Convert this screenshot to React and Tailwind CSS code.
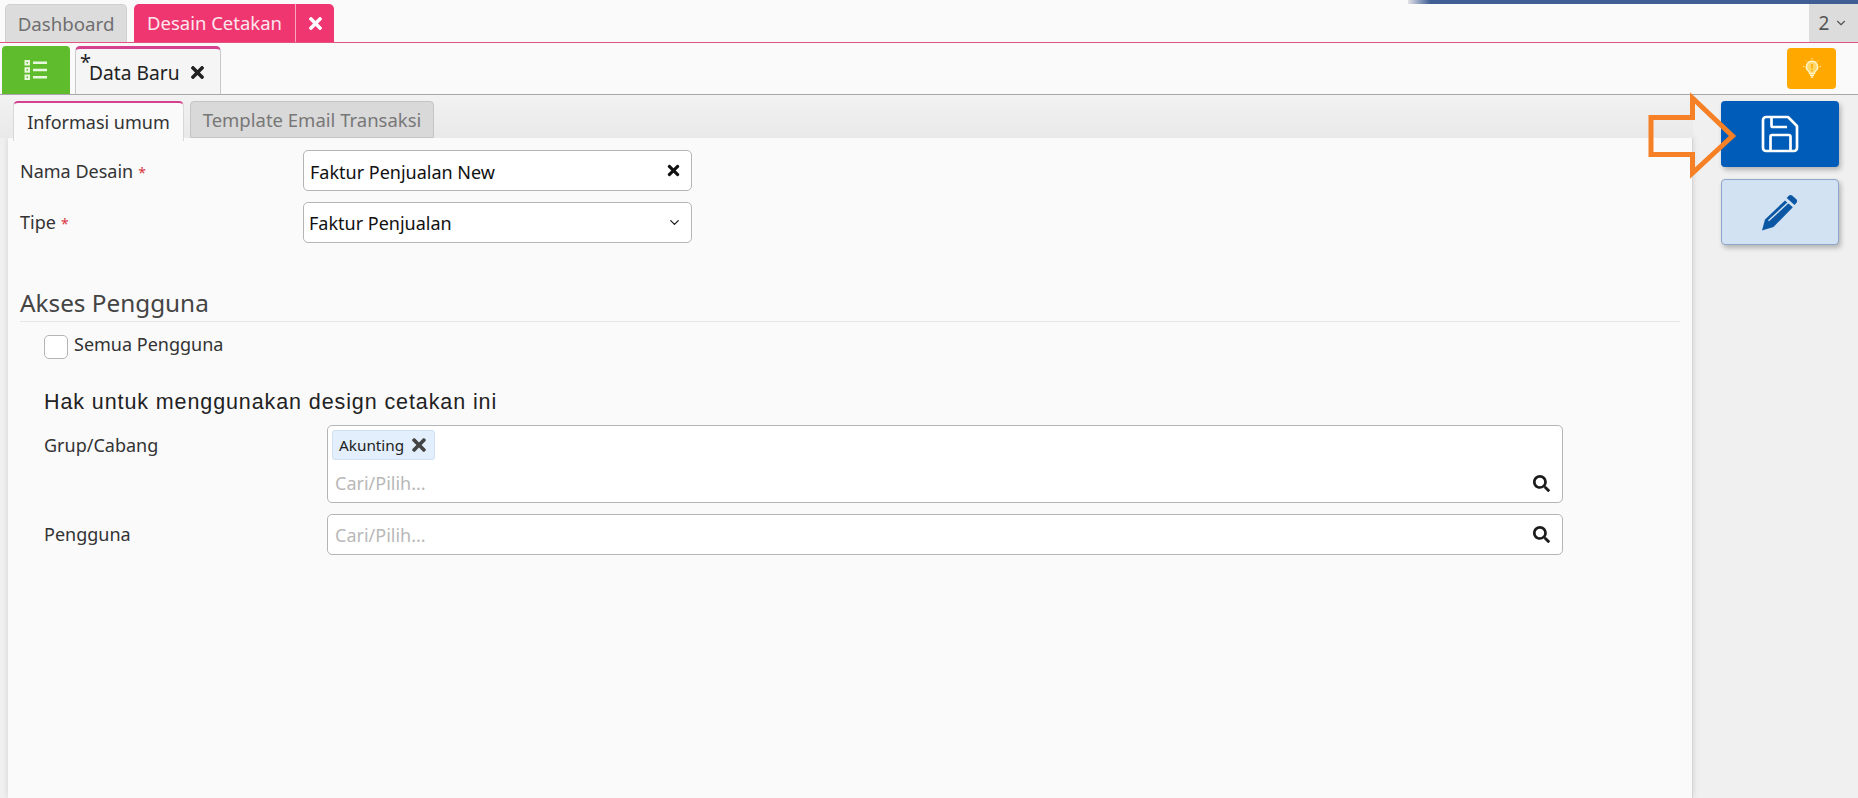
import React from "react";
import { FaTimes, FaSearch } from "react-icons/fa";
import { ChevronDown } from "lucide-react";

const ListIcon = () => (
  <svg width="24" height="22" viewBox="0 0 24 22" fill="none" stroke="#e9f7de" strokeWidth="2">
    <rect x="1.5" y="2" width="3.5" height="3.5" />
    <rect x="1.5" y="9.2" width="3.5" height="3.5" />
    <rect x="1.5" y="16.5" width="3.5" height="3.5" />
    <path d="M9 3.7h14M9 11h14M9 18.2h14" strokeWidth="2.4" />
  </svg>
);

const Bulb = () => (
  <svg width="20" height="22" viewBox="0 0 20 22" fill="none" stroke="#fff3c8">
    <path d="M10 3.200a5.600 5.600 0 0 0-3.400 10c.7.600 1 1.300 1 2.200h4.800c0-.9.300-1.600 1-2.200a5.600 5.600 0 0 0-3.400-10z" fill="#ffd766" strokeWidth="1.500" />
    <path d="M10 6v4.500M10 11.800v1.400" stroke="#ffa800" strokeWidth="1.500" />
    <path d="M8 17.200h4M8.800 19h2.400" strokeWidth="1.500" />
    <path d="M10 0v1.500M3.500 2.500l1 1M16.500 2.500l-1 1M1 8.500h1.500M17.500 8.500H19" strokeWidth=".8" />
  </svg>
);

const SaveIcon = () => (
  <svg width="38" height="38" viewBox="0 0 38 38" fill="none" stroke="#fff" strokeWidth="2.700" strokeLinejoin="round">
    <path d="M5 2h22l9 9v22a3 3 0 0 1-3 3H5a3 3 0 0 1-3-3V5a3 3 0 0 1 3-3z" />
    <path d="M10.500 2v8.500a1.500 1.500 0 0 0 1.500 1.500h14" />
    <path d="M9.500 36V21.500a1.500 1.500 0 0 1 1.500-1.500h17a1.500 1.500 0 0 1 1.500 1.500V36" />
  </svg>
);

const PencilIcon = () => (
  <svg width="38" height="38" viewBox="0 0 38 38" fill="#0b57a4">
    <path d="M27.500 3a2.800 2.800 0 0 1 3.900-.2l3.700 3.300a2.800 2.800 0 0 1 .2 3.900l-1.800 2-7.800-7z" />
    <path d="M24 7.400l7.800 6.900L12.500 34 1 37.500l3-11z" />
    <path d="M7.500 27.800L27.300 9.600" stroke="#d2e2f3" strokeWidth="1.400" fill="none" />
  </svg>
);

const Label = ({ children, req, className = "" }) => (
  <div className={"text-[18px] text-[#333] " + className}>
    {children}
    {req && <span className="text-[14px] text-[#d9363e] ml-[5px]">*</span>}
  </div>
);

export default function App() {
  return (
    <div className="relative w-[1858px] h-[798px] overflow-hidden flex flex-col bg-[#fafafa] [font-family:'Noto_Sans','Open_Sans',sans-serif] text-[18px] leading-[22px] text-[#222]">
      {/* strip of page behind, at top edge */}
      <div className="absolute top-0 left-[1408px] right-0 h-[4px] bg-gradient-to-r from-[#e4e2e6] from-0% via-[#3f5f94] via-[5%] to-[#3f5f94]" />

      {/* tabs row 1 */}
      <div className="h-[43px] shrink-0 flex items-end border-b border-[#e0557f] pl-[5px] relative">
        <div className="h-[38px] w-[122px] bg-[#dcdcdc] border border-[#cfcfcf] border-b-0 rounded-t-[5px] flex items-center justify-center text-[#6f6f6f] text-[18.700px]">
          Dashboard
        </div>
        <div className="ml-[7px] h-[38px] w-[200px] bg-[#ef3670] rounded-t-[5px] flex items-center text-[#fde6ee] text-[18.500px]">
          <span className="w-[161px] text-center">Desain Cetakan</span>
          <span className="w-px h-full bg-[#f7a6bf]" />
          <span className="flex-1 flex justify-center text-white"><FaTimes size={19} /></span>
        </div>
        <div className="ml-auto h-[38px] w-[49px] bg-[#dcdcdc] flex items-center justify-center gap-[5px] text-[#555] text-[19px]">
          2<ChevronDown size={14} strokeWidth={2} />
        </div>
      </div>

      {/* tabs row 2 */}
      <div className="h-[52px] shrink-0 flex items-end border-b border-[#a8a8a8] pl-[2px] pr-[22px]">
        <div className="h-[48px] w-[68px] bg-[#5fbc2c] rounded-t-[4px] flex items-center justify-center"><ListIcon /></div>
        <div className="ml-[5px] h-[48px] w-[146px] bg-[#f5f5f5] border border-[#c8c8c8] border-b-0 border-t-[3px] border-t-[#d6418f] rounded-t-[5px] flex items-center pl-[4px] relative text-[19.200px] text-[#222]">
          <span className="self-start text-[20px] leading-[20px] mt-[3px]">*</span>
          <span className="mt-[3px] -ml-[2px]">Data Baru</span>
          <FaTimes size={19} className="ml-[8px] mt-[2px] text-[#222]" />
        </div>
        <div className="ml-auto mb-[5px] w-[49px] h-[41px] bg-[#ffa800] rounded-[4px] flex items-center justify-center"><Bulb /></div>
      </div>

      {/* body */}
      <div className="flex-1 flex bg-[#f0f0f0]">
        <div className="w-[1693px] flex flex-col">
          <div className="flex items-start pl-[13px] pt-[6px] gap-[6px] h-[43px] shrink-0 relative bg-gradient-to-b from-[#f2f2f2] to-[#e9e9e9] -mb-[1px]">
            <div className="relative z-10 h-[40px] w-[171px] bg-[#fafafa] border border-[#d8d8d8] border-b-0 border-t-2 border-t-[#d6418f] rounded-t-[5px] flex items-center justify-center text-[18px] text-[#333]">
              Informasi umum
            </div>
            <div className="h-[37px] w-[244px] bg-[#d9d9d9] border border-[#c4c4c4] rounded-t-[4px] flex items-center justify-center text-[18.500px] text-[#777]">
              Template Email Transaksi
            </div>
          </div>
          <div className="flex-1 ml-[8px] bg-[#fafafa] rounded-tl-[3px] border-r border-[#d4d4d4] shadow-[0_0_6px_rgba(0,0,0,0.12)] pl-[12px] pr-[12px] pt-[13px]">
            {/* Nama Desain */}
            <div className="flex items-center h-[41px]">
              <Label req className="w-[283px] pt-[2px] text-[17.800px]">Nama Desain</Label>
              <div className="w-[389px] h-[41px] bg-white border border-[#b5b5b5] rounded-[5px] flex items-center pl-[6px] pr-[9px] text-[#111] text-[18px]">
                <span className="pt-[2px]">Faktur Penjualan New</span>
                <FaTimes size={17} className="ml-auto text-[#111]" />
              </div>
            </div>
            {/* Tipe */}
            <div className="flex items-center h-[41px] mt-[11px]">
              <Label req className="w-[283px] pt-[1px]">Tipe</Label>
              <div className="w-[389px] h-[41px] bg-white border border-[#b5b5b5] rounded-[5px] flex items-center pl-[5px] pr-[9px] text-[#111] text-[18px]">
                <span className="pt-[1px]">Faktur Penjualan</span>
                <ChevronDown size={15} strokeWidth={2.200} className="ml-auto text-[#222]" />
              </div>
            </div>
            {/* Akses */}
            <div className="mt-[43px] pb-[2px] border-b border-[#e6e6e6] text-[24.300px] leading-[33px] text-[#444]">Akses Pengguna</div>
            <div className="pl-[24px]">
              <div className="flex items-center mt-[13px] h-[24px]">
                <span className="w-[24px] h-[24px] bg-white border border-[#b5b5b5] rounded-[5px]" />
                <span className="ml-[6px] text-[#333] -mt-[6px]">Semua Pengguna</span>
              </div>
              <div className="mt-[30px] text-[21.500px] leading-[26px] tracking-[0.9px] text-[#222] [font-family:'Liberation_Sans',sans-serif]">
                Hak untuk menggunakan design cetakan ini
              </div>
              <div className="flex items-start mt-[10px]">
                <Label className="w-[283px] mt-[9px]">Grup/Cabang</Label>
                <div className="w-[1236px] h-[78px] bg-white border border-[#b5b5b5] rounded-[5px] pl-[4px] pr-[12px] pt-[4px]">
                  <div className="w-[103px] h-[30px] bg-[#e3effc] border border-[#cfe0f3] rounded-[3px] flex items-center pl-[6px] text-[15.300px] text-[#222]">
                    Akunting
                    <FaTimes size={20} className="ml-[5px] text-[#444]" />
                  </div>
                  <div className="flex items-center h-[32px] mt-[7px] pl-[3px] text-[#b8b8b8]">
                    Cari/Pilih...
                    <FaSearch size={17} className="ml-auto text-[#1c1c1c]" />
                  </div>
                </div>
              </div>
              <div className="flex items-center mt-[11px]">
                <Label className="w-[283px] -mt-[1px]">Pengguna</Label>
                <div className="w-[1236px] h-[41px] bg-white border border-[#b5b5b5] rounded-[5px] flex items-center pl-[7px] pr-[12px] text-[#b8b8b8]">
                  Cari/Pilih...
                  <FaSearch size={17} className="ml-auto text-[#1c1c1c]" />
                </div>
              </div>
            </div>
          </div>
        </div>

        {/* right actions */}
        <div className="flex-1 pl-[28px] pt-[6px] flex flex-col gap-[12px]">
          <div className="w-[118px] h-[66px] bg-[#005cb9] rounded-[4px] shadow-[2px_3px_5px_rgba(0,0,0,0.25)] flex items-center justify-center"><SaveIcon /></div>
          <div className="w-[118px] h-[66px] bg-[#d2e2f3] border border-[#8ba6c8] rounded-[4px] shadow-[2px_3px_5px_rgba(0,0,0,0.25)] flex items-center justify-center"><PencilIcon /></div>
        </div>
      </div>

      {/* orange arrow annotation */}
      <svg className="absolute left-[1640px] top-[90px]" width="105" height="92" viewBox="0 0 105 92" fill="none">
        <path d="M11 27.500H52.500V8L92.500 46 52.500 83V64.500H11z" stroke="#f58025" strokeWidth="5" strokeLinejoin="miter" />
      </svg>
    </div>
  );
}
